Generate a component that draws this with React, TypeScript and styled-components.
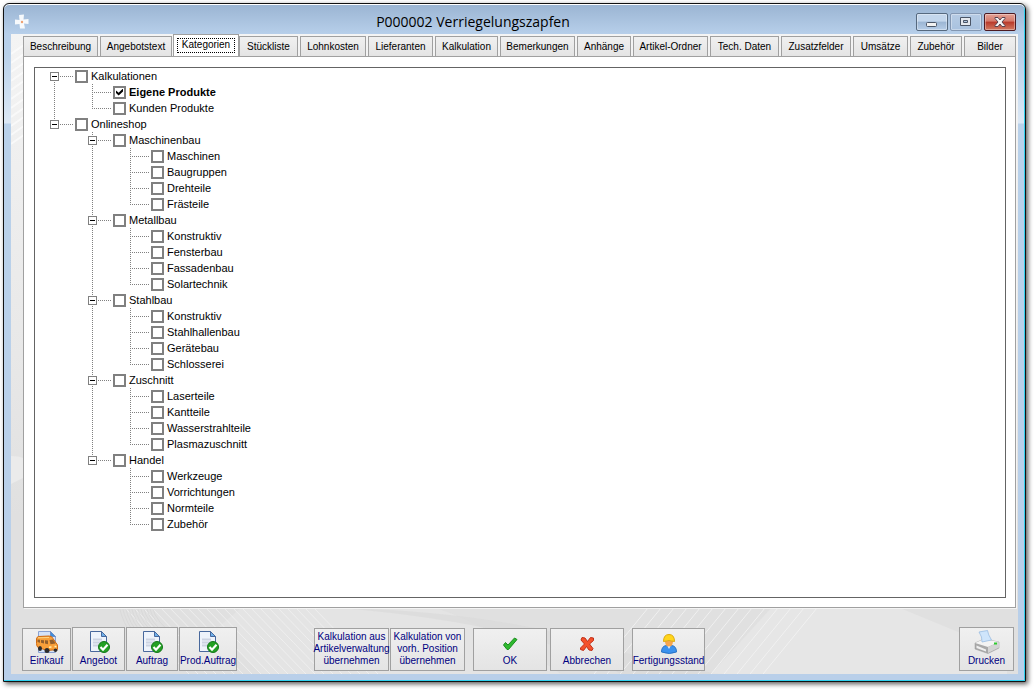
import React from "react";
import styled, { createGlobalStyle, css } from "styled-components";

const Global = createGlobalStyle`
  *, *::before, *::after { box-sizing: border-box; }
  html, body, #root { height: 100%; }
  body { margin: 0; background: #fff; color: #000; font-family: "Liberation Sans", Arial, sans-serif; font-size: 11px; }
`;

const Desktop = styled.div`
  display: flex;
  min-height: 100%;
  padding: 3px 8px 8px 3px;
`;

const Frame = styled.main`
  flex: 1;
  min-width: 0;
  display: flex;
  flex-direction: column;
  padding: 0 7px 7px;
  border: 1px solid #111;
  border-radius: 6px 6px 0 0;
  background: linear-gradient(#9ab4d2 0, #b7cfea 30px, #b9d1ea 50px, #dce8f5 119px, #b9d1ea 120px, #b9cfe9 100%);
  box-shadow: inset 0 1px #fff, inset -1px -1px #2fd0ee, 2px 2px 5px rgba(0, 0, 0, 0.65);
`;

const TitleBar = styled.header`
  display: grid;
  grid-template-columns: 20px 1fr 104px;
  align-items: center;
  height: 30px;
  padding: 5px 2px 0 3px;
`;

const Title = styled.h1`
  margin: 0;
  font: 400 14px/20px "Open Sans", "Noto Sans", sans-serif;
  text-align: center;
`;

const Caption = styled.div`
  display: flex;
  justify-content: flex-end;
  gap: 2px;
`;

const tones = {
  normal: css`border-color: #56697f; background: linear-gradient(#c3d6ec 0 45%, #9bb5d3 50%, #b6cde8);`,
  quiet: css`border-color: #8397b2; background: linear-gradient(#b6cbe4, #a9c2df);`,
  close: css`border-color: #4c1a22; background: linear-gradient(#e4a296 0, #d5796a 45%, #b8392a 50%, #d27a62);`,
};

const CaptionButton = styled.button<{ $tone: keyof typeof tones }>`
  display: grid;
  place-items: center;
  width: 32px;
  height: 18px;
  padding: 0;
  border: 1px solid;
  border-radius: 2px;
  box-shadow: inset 0 0 0 1px rgba(255, 255, 255, 0.35);
  ${(p) => tones[p.$tone]}
`;

const Client = styled.div`
  flex: 1;
  display: grid;
  background: linear-gradient(#f4f4f4, #e8e8e8 50%, #e0e0e0 75%);
  & > * { grid-area: 1 / 1; min-width: 0; }
`;

const Backdrop = styled.svg`
  width: 100%;
  height: 100%;
  min-height: 0;
`;

const Content = styled.div`
  display: flex;
  flex-direction: column;
  padding: 0 2px 3px 12px;
`;

const Tabs = styled.nav`
  display: flex;
  align-items: flex-end;
  gap: 2px;
  height: 23px;
  margin-bottom: -1px;
`;

const Tab = styled.button<{ $w: number; $active?: boolean }>`
  flex: ${(p) => p.$w} 1 ${(p) => p.$w}px;
  min-width: 0;
  height: 21px;
  padding: 0;
  border: 1px solid #a0a0a0;
  background: linear-gradient(#f0f0f0, #e4e4e4);
  color: #000;
  font: 10px/12px "Liberation Sans", Arial, sans-serif;
  white-space: nowrap;
  ${(p) => p.$active && css`
    height: 23px;
    margin: 0 -2px 0 -1px;
    border-bottom-color: #fff;
    background: #fff;
  `}
`;

const Focus = styled.span`
  display: inline-block;
  padding: 0 4px 1px;
  border: 1px dotted #000;
`;

const Panel = styled.section`
  flex: 1;
  display: flex;
  padding: 10px 9px 9px 10px;
  border: 1px solid #a0a0a0;
  background: #fff;
  box-shadow: 1px 1px #f4f4f4;
`;

const TreeBox = styled.div`
  flex: 1;
  padding-left: 15px;
  border: 1px solid #646464;
`;

const Branch = styled.ul<{ $nested?: boolean }>`
  margin: 0 0 0 ${(p) => (p.$nested ? "38px" : "0")};
  padding: 0;
  list-style: none;
`;

const Node = styled.li<{ $first: boolean; $last: boolean }>`
  background-image:
    repeating-linear-gradient(90deg, #808080 0 1px, transparent 1px 2px),
    repeating-linear-gradient(#808080 0 1px, transparent 1px 2px);
  background-repeat: no-repeat;
  background-position: 4px 8px, 4px ${(p) => (p.$first ? "8px" : "0")};
  background-size: 19px 1px, 1px ${(p) => (p.$last ? (p.$first ? "0" : "8px") : "100%")};
`;

const Row = styled.div`
  display: flex;
  align-items: center;
  height: 16px;
`;

const Slot = styled.span`
  flex: none;
  display: flex;
  width: 25px;
`;

const Expander = styled.button`
  display: grid;
  place-items: center;
  width: 9px;
  height: 9px;
  padding: 0;
  border: 1px solid #808080;
  background: #fff;
  &::before { content: ""; width: 5px; height: 1px; background: #000; }
`;

const Label = styled.label<{ $bold?: boolean }>`
  display: flex;
  align-items: center;
  gap: 3px;
  font: ${(p) => (p.$bold ? 700 : 400)} 11px/16px "Liberation Sans", Arial, sans-serif;
  white-space: nowrap;
`;

const Check = styled.input`
  appearance: none;
  display: grid;
  place-items: center;
  width: 13px;
  height: 13px;
  margin: 0;
  border: 2px solid #808080;
  background: #fff;
  &:checked::before {
    content: "";
    width: 7px;
    height: 7px;
    background: #000;
    clip-path: polygon(0 29%, 38% 62%, 100% 0, 100% 42%, 38% 100%, 0 66%);
  }
`;

const Footer = styled.footer`
  display: flex;
  justify-content: space-between;
  align-items: flex-end;
  margin-left: -1px;
  padding: 19px 2px 0 0;
`;

const Group = styled.div<{ $gap: number }>`
  display: flex;
  align-items: flex-end;
  gap: ${(p) => p.$gap}px;
`;

const Middle = styled.div`
  display: flex;
  align-items: flex-end;
  gap: 8px;
  margin-right: 177px;
`;

const Action = styled.button<{ $w: number; $tall?: boolean }>`
  display: flex;
  flex-direction: column;
  align-items: center;
  justify-content: flex-end;
  gap: 1px;
  width: ${(p) => p.$w}px;
  height: ${(p) => (p.$tall ? 44 : 43)}px;
  padding: 0 0 3px;
  border: 1px solid #a0a0a0;
  background: linear-gradient(#f0f0f0, #e4e4e4);
  color: #000080;
  font: 10px/12px "Liberation Sans", Arial, sans-serif;
  white-space: pre;
`;

type Item = { name: string; checked?: boolean; children?: Item[] };

const leaf = (...names: string[]): Item[] => names.map((name) => ({ name }));

const categories: Item[] = [
  { name: "Kalkulationen", children: [{ name: "Eigene Produkte", checked: true }, { name: "Kunden Produkte" }] },
  {
    name: "Onlineshop",
    children: [
      { name: "Maschinenbau", children: leaf("Maschinen", "Baugruppen", "Drehteile", "Frästeile") },
      { name: "Metallbau", children: leaf("Konstruktiv", "Fensterbau", "Fassadenbau", "Solartechnik") },
      { name: "Stahlbau", children: leaf("Konstruktiv", "Stahlhallenbau", "Gerätebau", "Schlosserei") },
      { name: "Zuschnitt", children: leaf("Laserteile", "Kantteile", "Wasserstrahlteile", "Plasmazuschnitt") },
      { name: "Handel", children: leaf("Werkzeuge", "Vorrichtungen", "Normteile", "Zubehör") },
    ],
  },
];

const tabs: [string, number][] = [
  ["Beschreibung", 75], ["Angebotstext", 72], ["Kategorien", 66], ["Stückliste", 59], ["Lohnkosten", 66],
  ["Lieferanten", 65], ["Kalkulation", 63], ["Bemerkungen", 75], ["Anhänge", 54], ["Artikel-Ordner", 75],
  ["Tech. Daten", 69], ["Zusatzfelder", 70], ["Umsätze", 55], ["Zubehör", 52], ["Bilder", 52],
];

function Tree({ items, nested }: { items: Item[]; nested?: boolean }) {
  return (
    <Branch $nested={nested}>
      {items.map((item, i) => (
        <Node key={item.name} $first={!nested && i === 0} $last={i === items.length - 1}>
          <Row>
            <Slot>{item.children && <Expander aria-label={`${item.name} zuklappen`} />}</Slot>
            <Label $bold={item.checked}>
              <Check type="checkbox" defaultChecked={item.checked} />
              {item.name}
            </Label>
          </Row>
          {item.children && <Tree items={item.children} nested />}
        </Node>
      ))}
    </Branch>
  );
}

const DocIcon = () => (
  <svg width="24" height="24" viewBox="0 0 24 24" aria-hidden="true">
    <path d="M3.500 1.500h11l5 5v15h-16z" fill="#eef3fb" stroke="#48689c" />
    <path d="M14.500 1.500v5h5z" fill="#6fb0ea" stroke="#48689c" strokeLinejoin="round" />
    <path d="M6 9.500h9M6 12.500h11M6 15.500h6" stroke="#ccd3e2" strokeWidth="2" />
    <circle cx="17" cy="17" r="5.500" fill="#23a023" stroke="#14781a" />
    <path d="M13.500 17l2.500 2.700 4.500-5" fill="none" stroke="#fff" strokeWidth="2.200" />
  </svg>
);

const VanIcon = () => (
  <svg width="24" height="24" viewBox="0 0 24 24" aria-hidden="true">
    <path d="M3.500 1.500h12l5 5v16h-17z" fill="#d5e3f8" stroke="#8aa2d2" />
    <path d="M15.500 1.500v5h5z" fill="#3f8fdc" stroke="#6a8cc4" strokeLinejoin="round" />
    <path d="M1.500 9q0-2 2-2.500L14 6q3 0 4 2.500L21 13q1.500 1 1.500 3v3.500l-10 1L3 17.500q-1.500-1.500-1.500-4z" fill="#f9a03a" stroke="#d0690f" />
    <path d="M2.500 9.500l2.500.3v3L2.500 12zM6 10l3 .2v3.300l-3-.7zM10 10.300l3 .2v3.800l-3-.7zM14.500 10l3.500-.5 2.500 4-5 .7z" fill="#94602c" />
    <path d="M3 7.800L14 7.500" stroke="#ffd681" />
    <path d="M14 17.300l2.500-.2M19.500 16.600l2-.2" stroke="#fff3b0" strokeWidth="1.500" />
    <ellipse cx="5" cy="18.500" rx="2" ry="2.500" fill="#2c2c2c" />
    <ellipse cx="12" cy="20.500" rx="2.500" ry="2.500" fill="#2c2c2c" />
    <ellipse cx="20.500" cy="20.300" rx="1.800" ry="1.800" fill="#2c2c2c" />
  </svg>
);

const OkIcon = () => (
  <svg width="20" height="20" viewBox="-2 -2 20 20" aria-hidden="true">
    <path d="M1.500 9l2-2.500L6 9l6.500-7L15 3.500l-8.500 10H5z" fill="#2fb92f" stroke="#1a8c1e" strokeLinejoin="round" />
  </svg>
);

const CancelIcon = () => (
  <svg width="20" height="20" viewBox="-2 -2 20 20" aria-hidden="true">
    <path d="M3 1.500l3 .5 2.500 3.500L11.500 1.500l3 .5v2.500L10.500 8l3.500 4.500-1 2-3-.5L7.500 10.500 4.500 14.500l-3-1V12L5.500 8 2 4z" fill="#f4512c" stroke="#c22f17" strokeLinejoin="round" />
  </svg>
);

const WorkerIcon = () => (
  <svg width="20" height="20" viewBox="0 0 20 20" aria-hidden="true">
    <path d="M2.500 18q0-6 5-6.500h5q5 .5 5 6.500-7 3-15 0z" fill="#3b92ee" stroke="#2b73c4" />
    <path d="M8 11l2 4 2-4z" fill="#f6f8ff" />
    <path d="M6 7q0 5.500 4 5.500T14 7z" fill="#f6a64f" />
    <path d="M4.500 7.500q0-7 5.500-7t5.500 7q-5.500-2-11 0z" fill="#ffd51c" stroke="#dcaa0b" />
  </svg>
);

const PrinterIcon = () => (
  <svg width="26" height="24" viewBox="0 0 26 24" aria-hidden="true">
    <path d="M1 13l9-4 15 3v6l-11 5.500L1 19z" fill="#a9a9a9" stroke="#999" strokeWidth=".5" />
    <path d="M1 13l9-4 15 3-11 5z" fill="#f3f3f3" />
    <path d="M14 17l11-5v5.500L14 23z" fill="#d4d4d4" />
    <path d="M2.500 15.500l9.500 4v2L2.500 18z" fill="#efefef" />
    <path d="M5 2l8.500-1.500q.5 4 4 9.500L8 12q.5-5-3-10z" fill="#cfe5fb" stroke="#8fb6e0" strokeWidth=".7" />
    <path d="M20 13.500h3" stroke="#2ecb2e" strokeWidth="2" />
  </svg>
);

const Logo = () => (
  <svg width="16" height="16" viewBox="0 0 16 16" aria-hidden="true">
    <path d="M5 1l5-.5-.5 5L14.500 5v5l-4.500-.5 1 5H6l-.5-4.500L1 10.500v-5l4.500.5z" fill="#fff" opacity=".9" />
    <circle cx="8" cy="8" r="1.200" fill="#f0a070" />
  </svg>
);

const range = (n: number) => Array.from({ length: n }, (_, i) => i);

const Pattern = () => (
  <Backdrop aria-hidden="true">
    <path d={range(11).map((i) => `M0 ${20 + i * 9}l20-14`).join("")} stroke="#fff" strokeWidth="2" opacity=".6" />
    <svg y="100%" overflow="visible">
      <path d="M0-218q8 0 12 2v20L0-190z" fill="#ebebeb" />
      <path d="M205-45L232-68H420q60 20 130 68H250z" fill="#e7e7e7" opacity=".5" />
      <path d="M330-66q160 4 270 40t180 26H610q-90-50-280-66z" fill="#d8d8d8" opacity=".6" />
      <path d="M889-66l107 44V0H700l60-66z" fill="#e9e9e9" opacity=".6" />
      <path d={range(22).map((i) => `M${112 + i * 9}-68l66 68`).join("")} stroke="#f2f2f2" opacity=".8" />
      <path d={range(12).map((i) => `M${108 + i * 3}-68q4 18 ${14 + i} 30`).join("")} fill="none" stroke="#d6d6d6" opacity=".7" />
      <path d={range(14).map((i) => `M${637 + i * 13}-66l-54 66`).join("")} stroke="#f4f4f4" opacity=".8" />
    </svg>
  </Backdrop>
);

export default function App() {
  return (
    <>
      <Global />
      <Desktop>
        <Frame>
          <TitleBar>
            <Logo />
            <Title>P000002 Verriegelungszapfen</Title>
            <Caption>
              <CaptionButton $tone="normal" aria-label="Minimieren">
                <svg width="12" height="10" viewBox="0 0 12 10"><rect x=".5" y="5.500" width="10" height="4" rx="1" fill="#f2f2f2" stroke="#4a5566" /></svg>
              </CaptionButton>
              <CaptionButton $tone="quiet" aria-label="Maximieren">
                <svg width="12" height="10" viewBox="0 0 12 10"><path d="M.5.500h10v8h-10zM3.500 3.500h4v2h-4z" fill="#e4e8ee" fillRule="evenodd" stroke="#4a5566" /></svg>
              </CaptionButton>
              <CaptionButton $tone="close" aria-label="Schließen">
                <svg width="12" height="10" viewBox="0 0 12 10"><path d="M1 .5h3L6 3 8 .5h3v1L8 5l3 3.500v1H8L6 7 4 9.500H1v-1L4 5 1 1.500z" fill="#f4f4f4" stroke="#5a4450" /></svg>
              </CaptionButton>
            </Caption>
          </TitleBar>
          <Client>
            <Pattern />
            <Content>
              <Tabs>
                {tabs.map(([name, w]) => (
                  <Tab key={name} $w={w} $active={name === "Kategorien"}>
                    {name === "Kategorien" ? <Focus>{name}</Focus> : name}
                  </Tab>
                ))}
              </Tabs>
              <Panel>
                <TreeBox>
                  <Tree items={categories} />
                </TreeBox>
              </Panel>
              <Footer>
                <Group $gap={1}>
                  <Action $w={49}><VanIcon />Einkauf</Action>
                  <Action $w={53} $tall><DocIcon />Angebot</Action>
                  <Action $w={52} $tall><DocIcon />Auftrag</Action>
                  <Action $w={58} $tall><DocIcon />Prod.Auftrag</Action>
                </Group>
                <Middle>
                  <Group $gap={1}>
                    <Action $w={75}>{"Kalkulation aus\nArtikelverwaltung\nübernehmen"}</Action>
                    <Action $w={75}>{"Kalkulation von\nvorh. Position\nübernehmen"}</Action>
                  </Group>
                  <Group $gap={3}>
                    <Action $w={74}><OkIcon />OK</Action>
                    <Action $w={74}><CancelIcon />Abbrechen</Action>
                  </Group>
                  <Action $w={73}><WorkerIcon />Fertigungsstand</Action>
                </Middle>
                <Action $w={55} $tall><PrinterIcon />Drucken</Action>
              </Footer>
            </Content>
          </Client>
        </Frame>
      </Desktop>
    </>
  );
}
